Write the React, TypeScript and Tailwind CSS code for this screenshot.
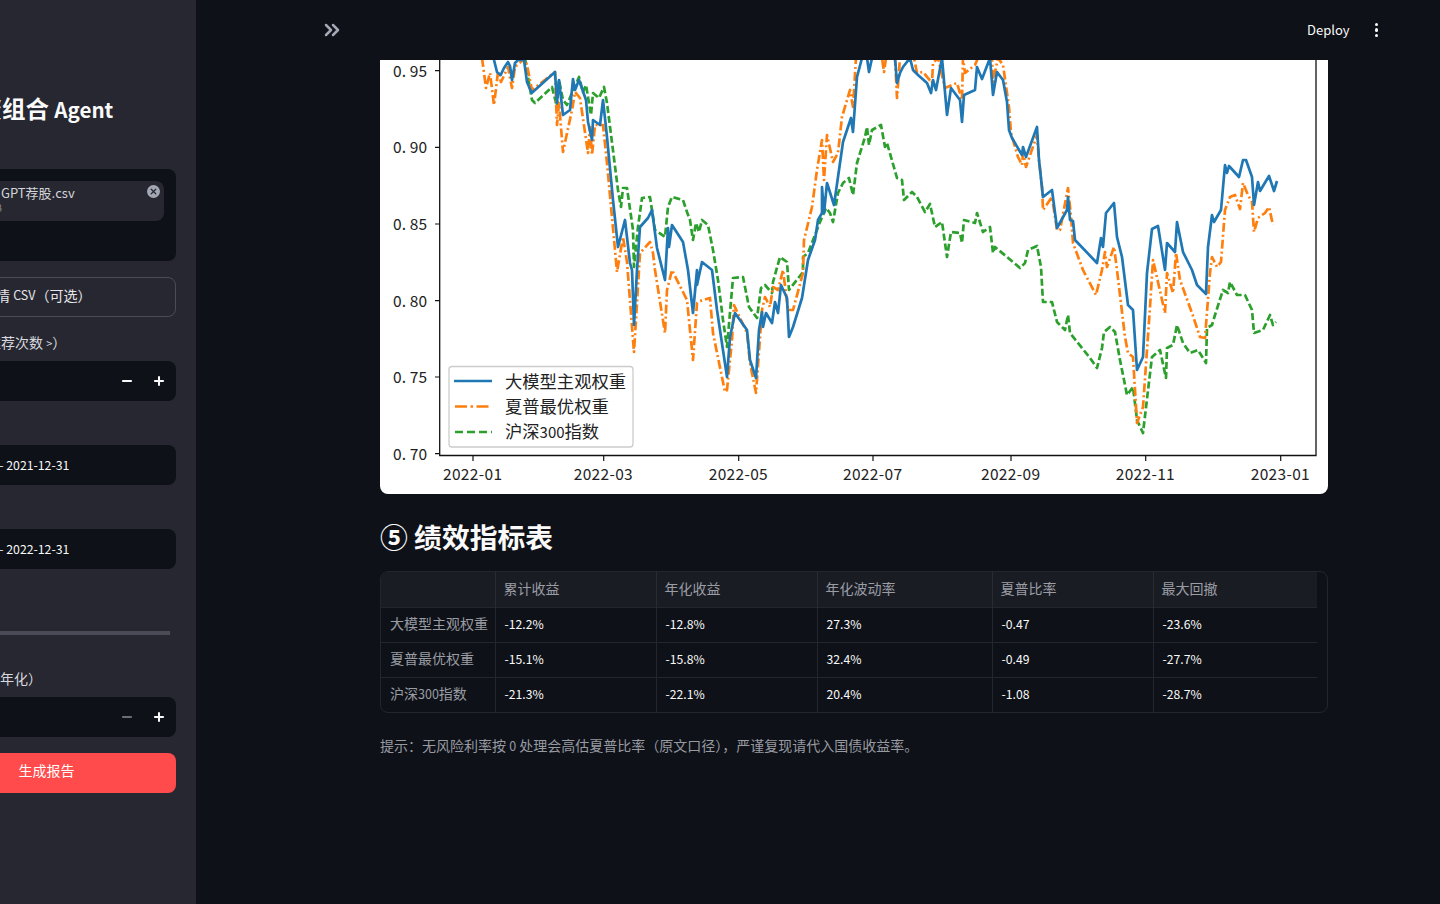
import React from 'react';
import { ChevronsRight, Minus, Plus, X } from 'lucide-react';

const blue =
  '494,60 497,72 500.7,75 504,68 508,62 510,66 512,80 515,63 518,60 524,60 527,82 531.7,93 555,72 557,103 559,80 563,115 570,110 573,79 575,90 579,80 586,100 588,122 592,140 593,120 600,125 603,100 607,137 613,200 618,247 625,220 630,263 632,270 634,325 637,270 640,227 648,218 652,210 657,248 665,280 668,228 669,247 672,225 683,242 688,270 693,313 697,270 697,285 702,262 712,270 717,310 727,377 730,337 735,313 747,330 750,360 756,378 759,330 762,312 763,327 766,313 772,323 775,302 778,313 781,285 787,298 789,337 793,327 802,298 808,260 815,240 818,220 822,213 822,187 824,213 827,183 834,205 838,177 843,142 851,118 853,132 857,77 862,58 867,58 869,72 872,58 895,58 897,83 900,73 903,67 910,58 913,70 918,75 927,83 931,93 933,80 936,90 942,58 947,115 951,88 960,100 962,122 964,95 975,90 977,67 982,79 990,58 993,95 997,72 1003,80 1007,102 1009,130 1012,138 1022,155 1023,147 1026,157 1037,127 1039,160 1043,197 1052,190 1057,228 1067,210 1068,197 1070,220 1073,221 1075,240 1097,263 1101,238 1103,247 1106,213 1114,203 1117,237 1122,257 1128,305 1133,310 1137,370 1143,357 1147,273 1152,229 1158,226 1165,270 1167,243 1175,252 1177,222 1183,252 1192,270 1197,285 1206,294 1208,247 1212,215 1214,222 1221,210 1225,165 1227,173 1229,166 1239,177 1243,160 1246,160 1252,177 1254,205 1258,182 1260,191 1269,176 1274,191 1277,181';

const orange =
  '482,58 486,88 490,73 494,105 498,72 501,82 508,67 512,88 515,67 525,58 528,70 532,90 555,72 557,125 559,103 563,152 572,110 575,92 580,98 588,153 590,127 592,155 595,125 603,125 607,163 615,250 617,272 623,237 627,262 634,352 637,303 640,253 650,242 653,253 655,270 665,333 667,290 672,270 687,300 693,360 697,303 700,301 710,298 713,333 725,392 727,390 732,340 734,305 747,333 750,363 756,393 762,310 765,297 770,307 773,287 778,290 783,270 788,310 793,310 803,273 804,240 812,207 817,170 822,140 824,180 827,135 833,162 838,153 842,117 850,90 853,107 856,58 882,58 884,72 886,58 895,58 897,98 900,58 914,58 917,73 923,72 932,83 933,63 938,58 945,88 957,83 962,100 963,58 965,73 975,65 978,58 992,58 993,82 998,58 1003,65 1009,107 1011,133 1018,157 1022,165 1023,153 1026,167 1037,135 1039,160 1042,187 1043,210 1052,197 1057,230 1060,230 1068,188 1071,216 1073,243 1083,270 1096,295 1102,270 1105,252 1107,267 1114,247 1117,270 1125,337 1128,353 1133,357 1137,423 1143,407 1150,307 1153,260 1165,313 1167,273 1173,293 1176,253 1180,280 1192,313 1200,337 1205,338 1210,273 1212,257 1217,267 1221,262 1225,210 1230,197 1235,195 1240,209 1243,183 1248,195 1252,202 1254,232 1258,218 1265,213 1269,207 1273,225';

const green =
  '525,58 528,77 532,100 535,103 552,87 557,107 559,80 563,100 567,105 572,93 579,77 583,92 586,85 591,115 593,93 599,98 604,87 607,103 618,190 621,207 623,188 627,188 633,230 634,267 638,227 642,198 650,197 655,230 665,237 668,207 672,197 683,200 687,212 690,220 693,240 696,223 699,232 702,220 708,225 713,250 718,280 723,320 727,347 733,278 743,277 749,307 757,318 761,288 765,285 772,293 773,282 780,257 787,262 789,290 803,272 803,257 808,253 815,235 820,222 826,208 830,213 833,222 838,193 843,183 849,178 853,195 857,163 865,137 867,127 869,145 872,130 881,125 885,147 887,143 897,178 902,180 904,200 912,192 917,197 925,212 930,204 935,227 942,222 947,257 951,232 960,233 962,243 964,220 975,223 977,213 983,232 990,227 993,253 995,247 1007,257 1020,268 1025,263 1028,250 1037,246 1041,267 1043,302 1052,302 1057,322 1065,330 1068,315 1070,333 1090,358 1097,368 1102,348 1104,332 1110,327 1115,332 1120,360 1127,395 1133,387 1137,420 1143,433 1149,382 1152,357 1160,350 1166,378 1167,348 1173,345 1177,325 1183,343 1190,353 1198,350 1206,363 1207,328 1212,325 1215,315 1223,290 1228,293 1230,282 1237,295 1245,295 1252,310 1254,333 1263,330 1270,315 1273,325 1276,322';

const yTicks = [
  { y: 70.7, label: '0. 95' },
  { y: 147.3, label: '0. 90' },
  { y: 224, label: '0. 85' },
  { y: 300.7, label: '0. 80' },
  { y: 377, label: '0. 75' },
  { y: 453.7, label: '0. 70' },
];

const xTicks = [
  { x: 473, label: '2022-01' },
  { x: 603.7, label: '2022-03' },
  { x: 738.7, label: '2022-05' },
  { x: 873, label: '2022-07' },
  { x: 1011, label: '2022-09' },
  { x: 1145.7, label: '2022-11' },
  { x: 1280.7, label: '2023-01' },
];

const rows = [
  ['大模型主观权重', '-12.2%', '-12.8%', '27.3%', '-0.47', '-23.6%'],
  ['夏普最优权重', '-15.1%', '-15.8%', '32.4%', '-0.49', '-27.7%'],
  ['沪深300指数', '-21.3%', '-22.1%', '20.4%', '-1.08', '-28.7%'],
];

const columns = [
  { name: '累计收益', width: 'w-[161px]' },
  { name: '年化收益', width: 'w-[161px]' },
  { name: '年化波动率', width: 'w-[175px]' },
  { name: '夏普比率', width: 'w-[161px]' },
  { name: '最大回撤', width: 'w-[164px]' },
];

const Chart = () => (
  <svg viewBox="380 60 948 434" className="block w-[948px] h-[434px] bg-white rounded-b-lg">
    <polyline points={green} fill="none" stroke="#2ca02c" strokeWidth="2.7" strokeDasharray="7 3" strokeLinejoin="round" />
    <polyline points={orange} fill="none" stroke="#ff7f0e" strokeWidth="2.7" strokeDasharray="9 3 2 3" strokeLinejoin="round" />
    <polyline points={blue} fill="none" stroke="#1f77b4" strokeWidth="2.7" strokeLinejoin="round" />
    <path d="M439.7 50V455.5H1316V50" fill="none" stroke="#111" strokeWidth="1.3" />
    <g fontSize="15.5" fill="#222">
      {yTicks.map((t) => (
        <g key={t.label}>
          <line x1="435" x2="439.7" y1={t.y} y2={t.y} stroke="#111" strokeWidth="1.2" />
          <text x="393" y={t.y + 6} textLength="34" xmlSpace="preserve">{t.label}</text>
        </g>
      ))}
      {xTicks.map((t) => (
        <g key={t.label}>
          <line x1={t.x} x2={t.x} y1="455.5" y2="461" stroke="#111" strokeWidth="1.2" />
          <text x={t.x - 30} y="480" textLength="59">{t.label}</text>
        </g>
      ))}
    </g>
    <rect x="449" y="366.5" width="184" height="80.5" rx="3" fill="#fff" fillOpacity="0.8" stroke="#ccc" strokeWidth="1.3" />
    <line x1="454" x2="492" y1="381" y2="381" stroke="#1f77b4" strokeWidth="2.7" />
    <line x1="455" x2="492" y1="406.5" y2="406.5" stroke="#ff7f0e" strokeWidth="2.7" strokeDasharray="12 3.5 2.5 3.5" />
    <line x1="455" x2="492" y1="432" y2="432" stroke="#2ca02c" strokeWidth="2.7" strokeDasharray="8 4" />
    <g fontSize="17.3" fill="#222">
      <text x="505" y="388">大模型主观权重</text>
      <text x="505" y="413">夏普最优权重</text>
      <text x="505" y="438">沪深<tspan fontSize="15">300</tspan>指数</text>
    </g>
  </svg>
);

const Stepper = ({ dimMinus }: { dimMinus?: boolean }) => (
  <div className="h-10 rounded-lg bg-[#0e1117] flex items-center justify-end pr-[10px] gap-[18px]">
    <Minus size={14} strokeWidth={3.5} className={dimMinus ? 'text-[#6d6e75]' : 'text-[#fafafa]'} />
    <Plus size={14} strokeWidth={3.5} className="text-[#fafafa]" />
  </div>
);

const DateField = ({ value }: { value: string }) => (
  <div className="h-10 rounded-lg bg-[#0e1117] flex items-center pl-[15px] text-[12.3px] text-[#fafafa] whitespace-nowrap">
    {value}
  </div>
);

const Sidebar = () => (
  <aside className="w-[196px] h-full shrink-0 bg-[#262730] overflow-hidden pr-5">
    <div className="w-[260px] -ml-[84px] pt-[91px] flex flex-col text-[#fafafa] whitespace-nowrap">
      <h1 className="pl-[39px] h-[34px] leading-[34px] text-[23.5px] font-bold">
        投资组合 <span className="text-[20.6px]">Agent</span>
      </h1>

      <div className="mt-[44px] h-[92px] rounded-lg bg-[#0e1117] p-3">
        <div className="h-10 rounded-lg bg-[#262730] flex justify-between pr-[4px] pl-[73px] pt-[4px]">
          <div>
            <p className="text-[13px] leading-[16px] text-[#d4d5da]">GPT荐股.csv</p>
            <p className="-ml-[26px] text-[10px] leading-[14px] text-[#8b8d97]">1.2KB</p>
          </div>
          <div className="w-[13px] h-[13px] rounded-full bg-[#a3a8b4] flex items-center justify-center">
            <X size={9} strokeWidth={3.5} className="text-[#262730]" />
          </div>
        </div>
      </div>

      <div className="mt-4 h-10 rounded-lg border border-[#4b4c56] flex items-center pl-[9px] pb-[3px] text-[14px] text-[#e6e6ea]">
        上传基准行情&nbsp;<span className="text-[12.5px]">CSV</span>（可选）
      </div>

      <p className="mt-[15px] ml-[1px] h-[20px] leading-[20px] text-[14px] text-[#d8d9de]">
        权重比例（推荐次数 <span className="text-[11px]">&gt;</span>）
      </p>
      <div className="mt-[9px]">
        <Stepper />
      </div>

      <div className="mt-[44px]">
        <DateField value="2021-01-01 – 2021-12-31" />
      </div>
      <div className="mt-[44px]">
        <DateField value="2022-01-01 – 2022-12-31" />
      </div>

      <p className="mt-[22px] -ml-[1px] h-[20px] leading-[20px] text-[14px] text-[#d8d9de]">调仓手续费率</p>
      <div className="mt-[20px] h-1 w-[254px] bg-[#4a4b57]" />

      <p className="mt-[33px] h-[20px] leading-[20px] text-[14px] text-[#d8d9de]">无风险利率（年化）</p>
      <div className="mt-[9px]">
        <Stepper dimMinus />
      </div>

      <button className="mt-4 h-10 rounded-lg bg-[#ff4b4b] pb-[5px] pl-[1px] text-[14px] text-white">生成报告</button>
    </div>
  </aside>
);

const MetricsTable = () => (
  <div className="mt-[18px] h-[142px] rounded-lg border border-[#24262d] overflow-hidden">
    <table className="table-fixed w-[936px] border-collapse text-left">
      <thead>
        <tr className="h-[35px] bg-[#1a1c24] text-[14px] text-[#9b9da5]">
          <th className="w-[114px] font-normal" />
          {columns.map((c) => (
            <th key={c.name} className={`font-normal pl-2 pb-[1px] border-l border-[#2a2c34] ${c.width}`}>
              {c.name}
            </th>
          ))}
        </tr>
      </thead>
      <tbody>
        {rows.map((r) => (
          <tr key={r[0]} className="h-[35px] border-t border-[#24262d]">
            <td className="pl-[9px] pb-[2px] text-[14px] text-[#9a9ca4] whitespace-nowrap">
              {r[0].includes('300') ? (
                <>沪深<span className="text-[12.5px]">300</span>指数</>
              ) : (
                r[0]
              )}
            </td>
            {r.slice(1).map((c, i) => (
              <td key={i} className="pl-[9px] pb-[1px] border-l border-[#24262d] text-[12.2px] text-[#fafafa]">
                {c}
              </td>
            ))}
          </tr>
        ))}
      </tbody>
    </table>
  </div>
);

export default function App() {
  return (
    <div className="flex w-screen h-screen overflow-hidden bg-[#0e1117] font-['Noto_Sans_CJK_SC','Noto_Sans',sans-serif]">
      <Sidebar />
      <main className="flex-1 min-w-0">
        <header className="h-[60px] flex items-center pl-[124px] pr-[62px]">
          <ChevronsRight size={24} strokeWidth={2.5} className="text-[#a3a8b4]" />
          <span className="ml-auto pb-[1px] text-[13px] text-[#fafafa]">Deploy</span>
          <div className="ml-[25px] flex flex-col gap-[2px]">
            <span className="w-[3.5px] h-[3.5px] rounded-full bg-[#fafafa]" />
            <span className="w-[3.5px] h-[3.5px] rounded-full bg-[#fafafa]" />
            <span className="w-[3.5px] h-[3.5px] rounded-full bg-[#fafafa]" />
          </div>
        </header>

        <div className="ml-[184px] w-[948px]">
          <Chart />
          <h2 className="mt-[25px] h-[34px] leading-[34px] text-[27.8px] font-bold text-[#fafafa]">⑤ 绩效指标表</h2>
          <MetricsTable />
          <p className="mt-[22px] text-[14px] leading-[20px] text-[#989aa2]">
            提示：无风险利率按 <span className="text-[12.5px]">0</span> 处理会高估夏普比率（原文口径），严谨复现请代入国债收益率。
          </p>
        </div>
      </main>
    </div>
  );
}
